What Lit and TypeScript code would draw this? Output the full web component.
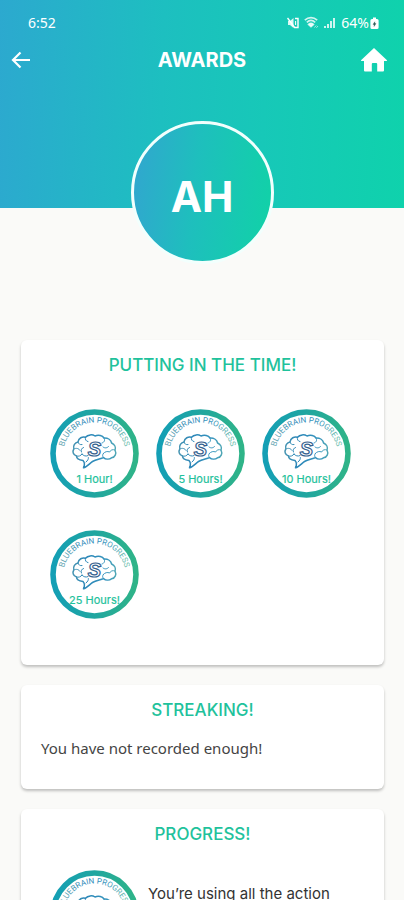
import { LitElement, html, svg, css } from "lit";
import { customElement, property } from "lit/decorators.js";

@customElement("award-badge")
export class AwardBadge extends LitElement {
  @property() label = "";

  static styles = css`
    :host {
      display: block;
      width: 89px;
      height: 89px;
      flex: none;
    }
    svg {
      display: block;
      width: 100%;
      height: 100%;
    }
    .motto {
      font: 400 8px "Roboto", sans-serif;
      fill: url(#ink);
    }
    .label {
      font: 400 11px "Inter", sans-serif;
      fill: #1fc29c;
      stroke: #1fc29c;
      stroke-width: 0.2;
    }
    .mark {
      font: italic 700 20px "Liberation Sans", sans-serif;
      fill: #ffffff;
      stroke: #35618f;
      stroke-width: 1.2;
    }
    .brain {
      fill: none;
      stroke: url(#ink);
      stroke-width: 1.5;
      stroke-linecap: round;
      stroke-linejoin: round;
    }
  `;

  render() {
    return html`
      <svg viewBox="0 0 89 89" role="img" aria-label=${this.label || "Bluebrain progress"}>
        <defs>
          <linearGradient id="ring" x1="0" x2="1" y1="0" y2="0">
            <stop offset="0" stop-color="#149fb5" />
            <stop offset="0.5" stop-color="#20a6a0" />
            <stop offset="1" stop-color="#2fb488" />
          </linearGradient>
          <linearGradient id="ink" gradientUnits="userSpaceOnUse" x1="14" x2="76" y1="0" y2="0">
            <stop offset="0" stop-color="#5a9fae" />
            <stop offset="0.35" stop-color="#2b86b8" />
            <stop offset="0.7" stop-color="#3795bd" />
            <stop offset="1" stop-color="#6cbcab" />
          </linearGradient>
          <path id="arc" d="M13.5 44.5 A31 31 0 0 1 75.5 44.5" />
        </defs>
        <circle cx="44.5" cy="44.5" r="41.5" fill="#ffffff" stroke="url(#ring)" stroke-width="5.6" />
        <text class="motto" text-anchor="middle">
          <textPath href="#arc" startOffset="50%">BLUEBRAIN PROGRESS</textPath>
        </text>
        <g class="brain">
          <path
            d="M33 51.5 C29 51 26.5 49.5 26.5 47 C23 46 22.2 42.5 23.8 40 C22.8 36.5 25 33.5 28 33 C28.5 29 32.5 27.3 35.5 28.3 C38 25.3 42.5 25.3 45 27 C48.5 25.6 52.5 26.6 54 29 C58 28.8 61 31 61.6 34 C64.8 35.5 66 38.5 65 41 C66.8 44.5 65 48.5 61.5 48.8 C59 50.8 55.5 50.2 53.5 48.6 C50 50 46 50.6 42.5 52.5 C40 54 37 58 33.5 58.8 C34.8 56 34.8 53.5 33 51.5 Z"
          />
          <g stroke-width="1">
            <path d="M28 33 C28.4 35 30 36 32 35.6 M35.5 28.3 C34.8 30.4 36 32.4 38 32.6" />
            <path d="M23.8 40 C26 38.6 29 39.4 30 41.4 M33.5 38.5 C31.6 39 30.6 41 31.4 43" />
            <path d="M26.5 47 C28.6 47.8 31 46.8 32 45 M32 45 C33.5 47 36 47.6 38 46.6" />
            <path d="M54 29 C55.4 31 54.4 33.4 52 34" />
            <path d="M65 41 C62.6 40 60.6 41 59.6 43 C57.4 42 55 42.6 53.4 44.4" />
            <path d="M53.5 48.6 C52.4 47.4 52.2 46 53.4 44.4 M53 38 C55 39.6 57.4 39 58.6 37.4" />
            <path d="M36 53 C37.8 51.6 38.6 50 38.4 48.6" />
          </g>
        </g>
        <text class="mark" x="44.5" y="47" text-anchor="middle">S</text>
        ${this.label
          ? svg`<text class="label" x="44.5" y="74" text-anchor="middle">${this.label}</text>`
          : null}
      </svg>
    `;
  }
}

@customElement("award-card")
export class AwardCard extends LitElement {
  @property() heading = "";

  static styles = css`
    :host {
      display: block;
      box-sizing: border-box;
      padding: 13px 20px 31px;
      border-radius: 6px;
      background: #ffffff;
      box-shadow: 0 2px 3px rgba(0, 0, 0, 0.24);
    }
    h2 {
      margin: 0;
      text-align: center;
      font: 500 17px/24px "Inter", sans-serif;
      color: #1fc29c;
    }
  `;

  render() {
    return html`<h2>${this.heading}</h2><slot></slot>`;
  }
}

@customElement("app-root")
export class AppRoot extends LitElement {
  private hours = ["1 Hour!", "5 Hours!", "10 Hours!", "25 Hours!"];

  static styles = css`
    :host {
      display: block;
      height: 100vh;
      overflow-y: auto;
      scrollbar-width: none;
      background: #fafaf8;
      font-family: "Inter", sans-serif;
    }
    header {
      display: flex;
      flex-direction: column;
      height: 208px;
      background: linear-gradient(92deg, #2ca9cf 0%, #1dbfc0 40%, #17c8b8 65%, #0fd2ac 100%);
      color: #ffffff;
    }
    .status {
      display: flex;
      justify-content: space-between;
      align-items: center;
      padding: 13px 25px 0 28px;
      font: 400 14px/20px "Noto Sans", sans-serif;
    }
    .indicators {
      display: flex;
      align-items: center;
      gap: 5px;
    }
    .charge {
      display: flex;
      align-items: center;
      gap: 1px;
    }
    svg {
      display: block;
    }
    nav {
      display: grid;
      grid-template-columns: 32px 1fr 32px;
      align-items: center;
      padding: 11px 14px 0 5px;
    }
    nav button {
      display: flex;
      align-items: center;
      justify-content: center;
      width: 32px;
      height: 32px;
      padding: 0;
      border: 0;
      background: none;
      color: inherit;
    }
    h1 {
      margin: 0;
      padding-left: 9px;
      text-align: center;
      font: 700 20px/32px "Inter", sans-serif;
    }
    .avatar {
      flex: none;
      align-self: center;
      box-sizing: border-box;
      width: 143px;
      height: 143px;
      margin-top: 45px;
      border: 3px solid #f2fffd;
      border-radius: 50%;
      background: linear-gradient(96deg, #2fa9cd 8%, #1ebfbd 45%, #12d0a9 92%) border-box;
      text-align: center;
      font: 700 42px/146px "Inter", sans-serif;
    }
    main {
      display: flex;
      flex-direction: column;
      gap: 20px;
      padding: 132px 20px 20px 21px;
    }
    .badges {
      display: grid;
      grid-template-columns: repeat(auto-fill, 89px);
      gap: 32px 17px;
      padding: 32px 9px 15px;
    }
    .note {
      margin: 0;
      padding-top: 16px;
      font: 400 15px/20px "Noto Sans", sans-serif;
      color: #444444;
    }
    .entry {
      display: flex;
      gap: 9px;
      padding: 24px 0 0 9px;
    }
    .entry p {
      margin: 0;
      padding-top: 12px;
      font: 400 15px/24px "Inter", sans-serif;
      color: #333333;
    }
  `;

  render() {
    return html`
      <header>
        <div class="status">
          <span>6:52</span>
          <div class="indicators">
            <svg width="12" height="14" viewBox="0 0 12 14" fill="none" stroke="#fff" stroke-width="1.4" aria-hidden="true">
              <path d="M1 5 H3 L6.5 2 V12 L3 9 H1 Z" fill="#fff" fill-opacity="0.85" stroke="none" />
              <path d="M0.5 2 L8 12" />
              <path d="M8 2.5 H11 V11.5 H8" />
              <path d="M8.6 5 V9" stroke-width="1" />
            </svg>
            <svg width="15" height="14" viewBox="0 0 15 14" fill="none" stroke="#fff" stroke-opacity="0.8" stroke-width="1.6" aria-hidden="true">
              <path d="M0.8 4.2 C4.5 0.8 9.5 0.8 13.2 4.2" />
              <path d="M2.8 6.4 C5.4 4 8.6 4 11.2 6.4" />
              <path d="M4.6 8.4 C6.2 7 7.8 7 9.4 8.4 L7 10.6 Z" fill="#fff" fill-opacity="0.8" />
              <path d="M10.5 11.5 L12.2 9.5 M12.4 11.8 L14 10" stroke-width="1" stroke-opacity="0.6" />
            </svg>
            <svg width="12" height="14" viewBox="0 0 12 14" fill="#fff" fill-opacity="0.8" aria-hidden="true">
              <path d="M0 10 H2 V12 H0 Z M3 8 H5 V12 H3 Z M6 5 H8 V12 H6 Z M9 2 H11 V12 H9 Z" />
            </svg>
            <div class="charge">
              <span>64%</span>
              <svg width="9" height="14" viewBox="0 0 9 14" aria-hidden="true">
                <path d="M3 1.5 H6 V3 H7 Q8.6 3 8.6 4.6 V11.4 Q8.6 13 7 13 H2 Q0.4 13 0.4 11.4 V4.6 Q0.4 3 2 3 H3 Z" fill="#fff" />
                <path d="M4.8 5.8 L3.1 8.4 H4.4 L4.1 10.4 L5.9 7.6 H4.6 Z" fill="#1d4f4a" stroke="#1d4f4a" stroke-width="0.4" />
              </svg>
            </div>
          </div>
        </div>
        <nav>
          <button type="button" aria-label="Back">
            <svg width="20" height="18" viewBox="0 0 20 18" fill="none" stroke="#fff" stroke-width="2.2">
              <path d="M9.5 1.5 L2 9 L9.5 16.5 M2 9 H19" />
            </svg>
          </button>
          <h1>AWARDS</h1>
          <button type="button" aria-label="Home">
            <svg width="28" height="26" viewBox="0 0 28 26" fill="#fff">
              <path d="M14 1 L27 13.2 Q27.4 14 26.4 14 H24 V23.4 Q24 24.4 23 24.4 H17.2 V17 Q17.2 16 16.2 16 H12.8 Q11.8 16 11.8 17 V24.4 H5 Q4 24.4 4 23.4 V14 H1.6 Q0.6 14 1 13.2 Z" />
            </svg>
          </button>
        </nav>
        <div class="avatar">AH</div>
      </header>
      <main>
        <award-card heading="PUTTING IN THE TIME!">
          <div class="badges">
            ${this.hours.map((label) => html`<award-badge label=${label}></award-badge>`)}
          </div>
        </award-card>
        <award-card heading="STREAKING!">
          <p class="note">You have not recorded enough!</p>
        </award-card>
        <award-card heading="PROGRESS!">
          <div class="entry">
            <award-badge></award-badge>
            <p>You’re using all the action</p>
          </div>
        </award-card>
      </main>
    `;
  }
}
